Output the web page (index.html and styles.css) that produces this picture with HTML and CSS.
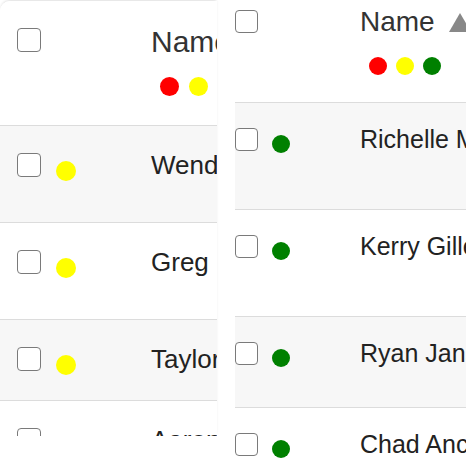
FILE: index.html
```html
<!DOCTYPE html>
<html>
<head>
<meta charset="utf-8">
<link rel="stylesheet" href="styles.css">
</head>
<body>
<div class="page">
  <section class="panel panel-left">
    <div class="row head">
      <span class="c-check"><span class="cb"></span></span>
      <span class="c-dot"></span>
      <div class="c-name">
        <div class="title">Name</div>
        <div class="legend"><i class="dot red"></i><i class="dot yellow"></i><i class="dot green"></i></div>
      </div>
    </div>
    <div class="row alt r96">
      <span class="c-check"><span class="cb"></span></span>
      <span class="c-dot"><i class="dot yellow"></i></span>
      <span class="c-name">Wendy Hernandez</span>
    </div>
    <div class="row r96">
      <span class="c-check"><span class="cb"></span></span>
      <span class="c-dot"><i class="dot yellow"></i></span>
      <span class="c-name">Greg Irwin</span>
    </div>
    <div class="row alt r80">
      <span class="c-check"><span class="cb"></span></span>
      <span class="c-dot"><i class="dot yellow"></i></span>
      <span class="c-name">Taylor Brooks</span>
    </div>
    <div class="row r96">
      <span class="c-check"><span class="cb"></span></span>
      <span class="c-dot"><i class="dot yellow"></i></span>
      <span class="c-name">Aaron Miller</span>
    </div>
  </section>

  <section class="panel panel-right">
    <div class="row head">
      <span class="c-check"><span class="cb"></span></span>
      <span class="c-dot"></span>
      <div class="c-name">
        <div class="title">Name<svg class="sort" width="22" height="19" viewBox="0 0 22 19"><polygon points="11,0 22,19 0,19" fill="#888"/></svg></div>
        <div class="legend"><i class="dot red"></i><i class="dot yellow"></i><i class="dot green"></i></div>
      </div>
    </div>
    <div class="row alt r106">
      <span class="c-check"><span class="cb"></span></span>
      <span class="c-dot"><i class="dot green"></i></span>
      <span class="c-name">Richelle Morgan</span>
    </div>
    <div class="row r106">
      <span class="c-check"><span class="cb"></span></span>
      <span class="c-dot"><i class="dot green"></i></span>
      <span class="c-name">Kerry Gillespie</span>
    </div>
    <div class="row alt r90">
      <span class="c-check"><span class="cb"></span></span>
      <span class="c-dot"><i class="dot green"></i></span>
      <span class="c-name">Ryan Jansen</span>
    </div>
    <div class="row r106">
      <span class="c-check"><span class="cb"></span></span>
      <span class="c-dot"><i class="dot green"></i></span>
      <span class="c-name">Chad Ancheta</span>
    </div>
  </section>
</div>
</body>
</html>
```
FILE: styles.css
```css
* { box-sizing: border-box; }
html, body { margin: 0; padding: 0; background: #fff; }
body { font-family: "Liberation Sans", Arial, sans-serif; }

.page {
  display: flex;
  align-items: flex-start;
  width: 473px;
  height: 468px;
  overflow: hidden;
}

.panel {
  flex: none;
  overflow: hidden;
  background: #fff;
}

.row {
  display: flex;
  align-items: flex-start;
  border-bottom: 1px solid #dcdcdc;
  background: #fff;
  white-space: nowrap;
}
.row.alt { background: #f7f7f7; }

.cb {
  display: block;
  background: #fff;
  border: 1.5px solid #7a7a7a;
  border-radius: 4px;
}

.dot {
  display: block;
  border-radius: 50%;
  flex: none;
}
.red { background: #ff0000; }
.yellow { background: #ffff00; }
.green { background: #008000; }

.title { line-height: 1; color: #333; }
.legend { display: flex; }
.c-name { line-height: 1; color: #222; }

/* ---------- Left panel ---------- */
.panel-left {
  width: 217px;
  height: 435px;
  margin-top: 1px;
  border-top-left-radius: 10px;
  box-shadow: 0 -2px 3px -1px rgba(0, 0, 0, 0.14);
}
.panel-left .row { height: 97px; }
.panel-left .row.head { height: 125px; }
.panel-left .row.r80 { height: 81px; }
.panel-left .c-check { padding-left: 17px; width: 56px; margin-top: 27px; flex: none; }
.panel-left .head .c-check { margin-top: 27px; }
.panel-left .cb { width: 24px; height: 24px; }
.panel-left .c-dot { width: 95px; margin-top: 35px; flex: none; }
.panel-left .c-dot .dot { width: 20px; height: 20px; }
.panel-left .c-name { font-size: 26px; margin-top: 26px; }
.panel-left .head .c-name { margin-top: 26px; }
.panel-left .title { font-size: 30px; }
.panel-left .legend { margin-top: 20px; padding-left: 9px; gap: 10px; }
.panel-left .legend .dot { width: 19px; height: 19px; }

/* ---------- Right panel ---------- */
.panel-right {
  width: 231px;
  height: 468px;
  margin-left: 18px;
}
.panel-right .row { height: 107px; }
.panel-right .row.head { height: 103px; }
.panel-right .row.r90 { height: 91px; }
.panel-right .c-check { width: 37px; margin-top: 25px; flex: none; }
.panel-right .head .c-check { margin-top: 10px; }
.panel-right .cb { width: 23px; height: 23px; }
.panel-right .c-dot { width: 88px; margin-top: 32px; flex: none; }
.panel-right .c-dot .dot { width: 18px; height: 18px; }
.panel-right .c-name { font-size: 25px; margin-top: 24px; }
.panel-right .head .c-name { margin-top: 8px; }
.panel-right .title { font-size: 28px; display: flex; align-items: flex-start; }
.panel-right .sort { flex: none; margin-left: 14px; margin-top: 5px; }
.panel-right .legend { margin-top: 21px; padding-left: 9px; gap: 9px; }
.panel-right .legend .dot { width: 18px; height: 18px; }
```
